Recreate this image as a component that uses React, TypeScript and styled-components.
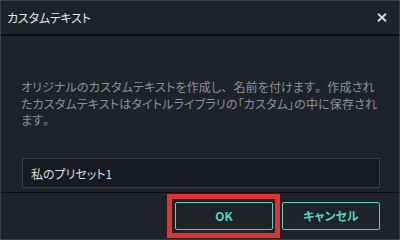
import styled, { createGlobalStyle } from "styled-components";

const GlobalStyle = createGlobalStyle`
  html, body {
    margin: 0;
    padding: 0;
    background: #1e232a;
  }
  * {
    box-sizing: border-box;
  }
`;

const FONT = `"Noto Sans CJK JP", "Noto Sans", sans-serif`;
const TEAL = "#52d3c0";

const Window = styled.div`
  width: 400px;
  height: 240px;
  display: flex;
  flex-direction: column;
  background: #1e232a;
  border: 1px solid #3a3f47;
  font-family: ${FONT};
  font-feature-settings: "palt";
`;

const TitleBar = styled.div`
  height: 35px;
  flex: none;
  display: flex;
  align-items: center;
  justify-content: space-between;
  padding: 0 11px 0 6px;
  border-bottom: 2px solid #0c0e11;
`;

const Title = styled.span`
  font-size: 12px;
  color: #e4e6e8;
  letter-spacing: -0.2px;
`;

const CloseButton = styled.button`
  width: 12px;
  height: 12px;
  padding: 0;
  border: none;
  background: transparent;
  display: flex;
  align-items: center;
  justify-content: center;
  cursor: pointer;
`;

const Body = styled.div`
  flex: 1;
  display: flex;
  flex-direction: column;
  padding: 43px 20px 4px 20px;
  border-bottom: 1px solid #0c0e11;
`;

const Message = styled.p`
  margin: 0;
  font-size: 12px;
  line-height: 16.5px;
  letter-spacing: 0.15px;
  color: #8b9097;
  white-space: nowrap;
`;

// full-width punctuation, as in the original dialog font
const Punct = styled.span`
  font-feature-settings: normal;
`;

const NameInput = styled.input`
  margin-top: auto;
  margin-left: 1px;
  height: 30px;
  width: 358px;
  padding: 0 8px;
  background: #171b21;
  border: 1px solid #3a3f47;
  color: #d8dadd;
  font-family: ${FONT};
  font-feature-settings: "palt";
  font-size: 12px;
  outline: none;
`;

const Footer = styled.div`
  height: 46px;
  flex: none;
  display: flex;
  align-items: center;
  justify-content: flex-end;
  gap: 2px;
  padding: 0 19px 1px 0;
`;

const Highlight = styled.div`
  border: 5px solid #e4322f;
  padding: 3px 2px 3px 3px;
  display: flex;
`;

const ActionButton = styled.button`
  width: 98px;
  height: 28px;
  background: transparent;
  border: 1.5px solid ${TEAL};
  border-radius: 2px;
  color: ${TEAL};
  font-family: ${FONT};
  font-feature-settings: "palt";
  font-size: 12px;
  font-weight: 700;
  cursor: pointer;
`;

export default function App() {
  return (
    <>
      <GlobalStyle />
      <Window>
        <TitleBar>
          <Title>カスタムテキスト</Title>
          <CloseButton aria-label="閉じる">
            <svg width="10" height="9" viewBox="0 0 10 9">
              <path d="M1 0.8 L9 8.2 M9 0.8 L1 8.2" stroke="#d6d8db" strokeWidth="2" />
            </svg>
          </CloseButton>
        </TitleBar>
        <Body>
          <Message>
            オリジナルのカスタムテキストを作成し<Punct>、</Punct>名前を付けます<Punct>。</Punct>作成され
            <br />
            たカスタムテキストはタイトルライブラリの「カスタム」の中に保存され
            <br />
            ます<Punct>。</Punct>
          </Message>
          <NameInput defaultValue="私のプリセット1" />
        </Body>
        <Footer>
          <Highlight>
            <ActionButton>OK</ActionButton>
          </Highlight>
          <ActionButton>キャンセル</ActionButton>
        </Footer>
      </Window>
    </>
  );
}
